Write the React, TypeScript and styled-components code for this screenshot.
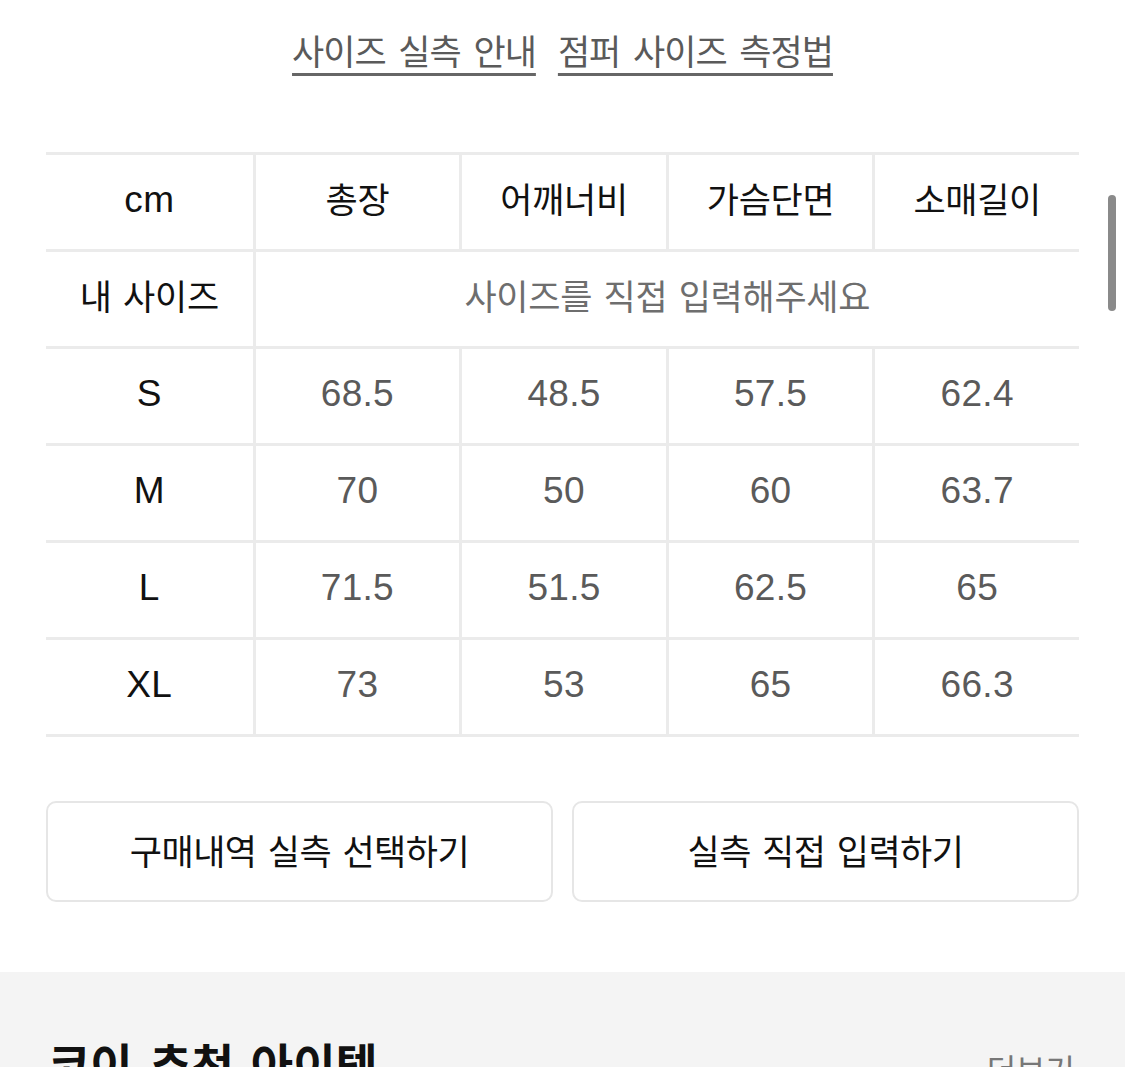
import React from "react";
import styled, { createGlobalStyle } from "styled-components";

const Global = createGlobalStyle`
  html, body { margin: 0; padding: 0; background: #fff; }
  body {
    font-family: "Liberation Sans", "Noto Sans CJK KR", sans-serif;
    color: #111;
    -webkit-font-smoothing: antialiased;
  }
`;

const Page = styled.div`
  width: 1125px;
  height: 1067px;
  overflow: hidden;
`;

const Content = styled.div`
  padding: 0 46px;
`;

const LinkRow = styled.div`
  display: flex;
  justify-content: center;
  gap: 22px;
  padding-top: 30px;
  height: 152px;
  box-sizing: border-box;
`;

const Link = styled.a`
  font-size: 35px;
  line-height: 46px;
  letter-spacing: -1px;
  color: #5a5a5a;
  word-spacing: 4px;
  text-decoration: underline;
  text-decoration-thickness: 3px;
  text-underline-offset: 8px;
  text-decoration-color: #666;
  cursor: pointer;
`;

const Grid = styled.div`
  display: grid;
  grid-template-columns: repeat(5, 1fr);
  border-top: 3px solid #ebebeb;
`;

const Cell = styled.div<{ $first?: boolean; $span?: number; $tone?: "dark" | "mid" | "light"; $latin?: boolean }>`
  height: 97px;
  display: flex;
  align-items: center;
  justify-content: center;
  padding-bottom: ${(p) => (p.$latin ? "4px" : "9px")};
  box-sizing: border-box;
  border-bottom: 3px solid #ebebeb;
  border-left: ${(p) => (p.$first ? "none" : "3px solid #ebebeb")};
  grid-column: span ${(p) => p.$span ?? 1};
  font-size: ${(p) => (p.$latin ? "37px" : "35px")};
  letter-spacing: ${(p) => (p.$latin ? "0.3px" : "-0.3px")};
  word-spacing: 2px;
  color: ${(p) => (p.$tone === "mid" ? "#5a5a5a" : p.$tone === "light" ? "#6e6e6e" : "#111")};
`;

const ButtonRow = styled.div`
  display: grid;
  grid-template-columns: 1fr 1fr;
  gap: 19px;
  margin-top: 64px;
`;

const ActionButton = styled.button`
  height: 101px;
  border: 2px solid #e6e6e6;
  border-radius: 10px;
  background: #fff;
  font-family: inherit;
  font-size: 35px;
  letter-spacing: -0.5px;
  word-spacing: 2px;
  color: #111;
  padding: 0 0 4px 0;
  cursor: pointer;
`;

const GraySection = styled.section`
  margin-top: 70px;
  background: #f4f4f4;
  padding: 64px 48px 0 48px;
  height: 200px;
  display: flex;
  justify-content: space-between;
  align-items: baseline;
  box-sizing: border-box;
`;

const SectionTitle = styled.h2`
  margin: 0;
  font-size: 46px;
  line-height: 60px;
  font-weight: 700;
  color: #111;
  letter-spacing: 0px;
  word-spacing: 4px;
`;

const More = styled.span`
  font-size: 32px;
  color: #777;
  margin-right: 2px;
`;

const ScrollThumb = styled.div`
  position: fixed;
  top: 195px;
  right: 9px;
  width: 8px;
  height: 116px;
  border-radius: 4px;
  background: #8a8a8a;
`;

const headers = ["cm", "총장", "어깨너비", "가슴단면", "소매길이"];
const rows: [string, string[]][] = [
  ["S", ["68.5", "48.5", "57.5", "62.4"]],
  ["M", ["70", "50", "60", "63.7"]],
  ["L", ["71.5", "51.5", "62.5", "65"]],
  ["XL", ["73", "53", "65", "66.3"]],
];

export default function App() {
  return (
    <Page>
      <Global />
      <Content>
        <LinkRow>
          <Link>사이즈 실측 안내</Link>
          <Link>점퍼 사이즈 측정법</Link>
        </LinkRow>
        <Grid>
          {headers.map((h, i) => (
            <Cell key={h} $first={i === 0} $latin={i === 0}>
              {h}
            </Cell>
          ))}
          <Cell $first>내 사이즈</Cell>
          <Cell $span={4} $tone="light">
            사이즈를 직접 입력해주세요
          </Cell>
          {rows.map(([size, vals]) => (
            <React.Fragment key={size}>
              <Cell $first $latin>
                {size}
              </Cell>
              {vals.map((v, i) => (
                <Cell key={i} $tone="mid" $latin>
                  {v}
                </Cell>
              ))}
            </React.Fragment>
          ))}
        </Grid>
        <ButtonRow>
          <ActionButton>구매내역 실측 선택하기</ActionButton>
          <ActionButton>실측 직접 입력하기</ActionButton>
        </ButtonRow>
      </Content>
      <GraySection>
        <SectionTitle>코이 추천 아이템</SectionTitle>
        <More>더보기</More>
      </GraySection>
      <ScrollThumb />
    </Page>
  );
}
